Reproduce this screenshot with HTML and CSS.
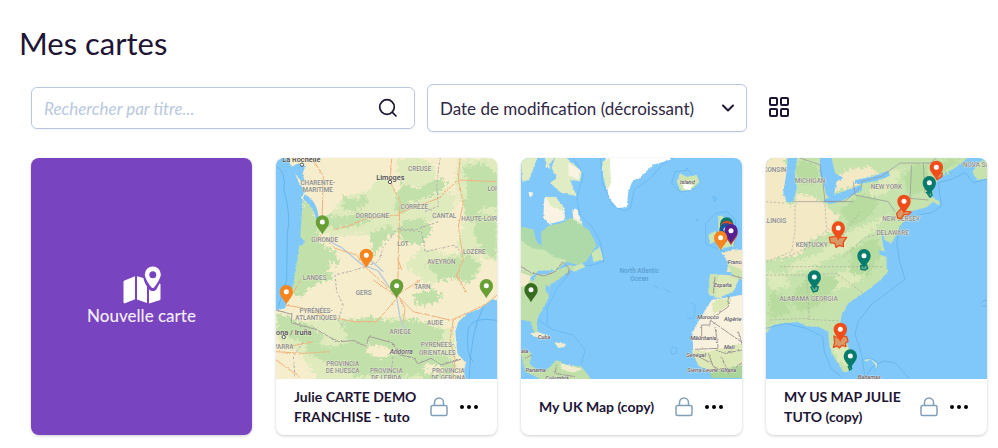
FILE: index.html
```html
<!DOCTYPE html>
<html lang="fr">
<head>
<meta charset="utf-8">
<meta name="viewport" content="width=device-width, initial-scale=1">
<title>Mes cartes</title>
<link rel="stylesheet" href="styles.css">
</head>
<body>
<svg class="defs" aria-hidden="true">
  <defs>
    <filter id="rough" x="-5%" y="-5%" width="110%" height="110%">
      <feTurbulence type="fractalNoise" baseFrequency="0.1" numOctaves="3" seed="4"/>
      <feDisplacementMap in="SourceGraphic" scale="34" xChannelSelector="R" yChannelSelector="G"/>
    </filter>
    <filter id="coast" x="-5%" y="-5%" width="110%" height="110%">
      <feTurbulence type="fractalNoise" baseFrequency="0.15" numOctaves="2" seed="8"/>
      <feDisplacementMap in="SourceGraphic" scale="8" xChannelSelector="R" yChannelSelector="G"/>
    </filter>
    <symbol id="pin" viewBox="-24 -62 48 64" overflow="visible">
      <path d="M0 0C-4-12-20-22-20-38A20 20 0 1 1 20-38C20-22 4-12 0 0Z"/>
      <circle cy="-38" r="7.500" fill="#fff"/>
    </symbol>
    <symbol id="lock" viewBox="0 0 18 20">
      <path d="M2.500 8.500h13a1.500 1.500 0 0 1 1.500 1.500v7a1.500 1.500 0 0 1-1.500 1.500h-13A1.500 1.500 0 0 1 1 17v-7a1.500 1.500 0 0 1 1.500-1.500ZM4.500 8.500V5.500a4.500 4.500 0 0 1 9 0v3" fill="none" stroke="#7f9fb9" stroke-width="1.500"/>
    </symbol>
    <symbol id="dots" viewBox="0 0 20 6">
      <circle cx="3" cy="3" r="2"/><circle cx="10" cy="3" r="2"/><circle cx="17" cy="3" r="2"/>
    </symbol>
  </defs>
</svg>

<main class="page">
  <h1 class="title">Mes cartes</h1>

  <form class="toolbar">
    <div class="search">
      <input class="search-input" type="text" aria-label="Rechercher par titre" placeholder="Rechercher par titre...">
      <button class="icon-button" type="button" aria-label="Rechercher">
        <svg width="20" height="20" viewBox="0 0 20 20" fill="none" stroke="#1e1535" stroke-width="1.700" stroke-linecap="round"><circle cx="9" cy="9" r="7.300"/><path d="M14.400 14.400 18 18"/></svg>
      </button>
    </div>
    <div class="sort">
      <select class="sort-select" aria-label="Trier par">
        <option>Date de modification (décroissant)</option>
      </select>
      <svg class="chevron" width="14" height="8" viewBox="0 0 14 8" fill="none" stroke="#1e1535" stroke-width="2" stroke-linecap="round" stroke-linejoin="round"><path d="m2 1.500 5 5 5-5"/></svg>
    </div>
    <button class="icon-button" type="button" aria-label="Affichage en grille">
      <svg width="24" height="24" viewBox="0 0 24 24" fill="none" stroke="#1e1535" stroke-width="2"><rect x="3" y="2" width="7" height="7" rx="1"/><rect x="14" y="2" width="7" height="7" rx="1"/><rect x="3" y="13" width="7" height="7" rx="1"/><rect x="14" y="13" width="7" height="7" rx="1"/></svg>
    </button>
  </form>

  <section class="grid">
    <a class="card new-card" href="#">
      <svg width="38" height="38" viewBox="0 0 38 38" fill="#fff" aria-hidden="true">
        <path d="M1.500 14.500 12 10.300V33.300L2 37.300C1.200 37.600.500 37.100.500 36.300V16Q.500 14.900 1.500 14.500ZM14 10.200 20.400 12.100C20.900 15.300 22.300 18.100 24 20.500V37L14 33.500Z"/>
        <path d="M26 23.200C28.100 25.700 31.500 25.700 33.500 23.200L36.400 17.800Q37.500 17.400 37.500 18.500V33Q37.500 33.800 36.600 34.200L26 37.500Z"/>
        <path fill-rule="evenodd" d="M29.800.500A8 8 0 0 0 21.800 8.500C21.800 12 26 18.500 28.600 21.500 29.300 22.300 30.300 22.300 31 21.500 33.600 18.500 37.800 12 37.800 8.500A8 8 0 0 0 29.800.500ZM29.800 5.300a3.500 3.500 0 1 1 0 7 3.500 3.500 0 0 1 0-7Z"/>
      </svg>
      <span class="new-label">Nouvelle carte</span>
    </a>

    <article class="card">
      <svg class="map" viewBox="18 24 663 663" role="img" aria-label="Carte du sud-ouest de la France">
        <rect x="18" y="24" width="663" height="663" fill="#f5edcb"/>
        <g fill="#dfebbd" filter="url(#rough)">
          <path d="M190 175l40-35 70-20 30-45 35 10 10 40 60 5 40 20 50-30 40 20-20 50-60 20-40 40-60-10-60 30-50-20-70 10-60-10z"/>
          <path d="M380 30l60-10 50 20 10 50-60 20-50-10zM560 30l130-10v320l-60-20-40 20-30-60 20-60-20-50zM400 345l60-50 70 20 60-10 50 40-40 60-60-30-60 30z"/>
          <path d="M190 500l120 10 80-10 160 40 10 60-40 100H150l-60-90-60-30-20-50 50-10z"/>
        </g>
        <g fill="#c2e1aa" filter="url(#rough)">
          <path d="M100 145l28 30 15 60 5 40 45 30 15 30-20 50-50 20-55 35-25-35 12-65 16-110z"/>
          <path d="M395 95l40 20 80-30 20 20-50 35-65 15-20 40-30-20zM215 130l40 20 30-15 10 25-40 25-35-10zM160 195l50 5 60-10 40 15-35 20-80 10-35-15zM395 215l55-10 40 30-35 50-50-5-25-35zM580 50l60-10 50 40v100l-50-10-35 50-30-50 20-40zM620 195l60 10v120l-40-15-30-60zM300 250l55-25 20 20-40 35-25 40z"/>
          <path d="M470 345l60-20 70-10 30 30-30 60-50-25-35 15zM430 430l60-10 30 15-20 20-60 15zM210 515l90-15 70 15 60-10 90 35-10 40-65 35-60-15-70 5-70-15zM18 490l50 15 50 20 45 35-10 20-60-5-70-25zM100 570l80 20 90-20 60 25 60-10 60 40-20 55-140-5-30 10-60-40-80-30zM400 600l80 10 60 10 20 30-15 25-70 15-80-30z"/>
        </g>
        <g fill="#f5edcb" filter="url(#rough)">
          <path d="M290 580l60 10 30 20-40 15-50-15zM560 140l25 20-8 60-25-30zM460 640l60 10 10 20-60 5zM180 330l25 30-30 10z"/>
        </g>
        <g fill="#80c8fa" filter="url(#coast)">
          <path d="M0 0H42L65 50 85 40 105 48 98 72 104 92 96 98 75 70 85 95 106 125 92 142 98 150 91 260 105 275 95 287 88 286 70 405 45 475 18 481 0 482Z"/>
          <path d="M104 133q38 20 42 72l8 25-14-8q-1-44-40-76z"/>
          <path d="M700 455 665 448 628 478 592 490 565 515 556 545 562 610 588 640 580 665 592 700H700Z"/>
        </g>
        <path d="M20 50q28 15 22 70 22 80 10 130l-2 140-25 80M700 515q-90-20-105 20-10 80 15 100M640 470q-40 80-42 215" fill="none" stroke="#55abe5" stroke-width="2"/>
        <path d="M165 268l50 25 60 50 50 20 55 80 10 60 20 50M340 365l-45-40" fill="none" stroke="#b7cbdc" stroke-width="4"/>
        <g fill="none" stroke="#f1b27e" stroke-width="3" filter="url(#coast)">
          <path d="M125 24l35 55-5 165M365 24l-5 70 30 60-5 155 0 50-5 80M150 255l45 40 65 20 30 40 90 80 50 50 110 25M385 195l-95 10-60 25-40 10M385 190l120-45 60-55 110 5M570 24l-5 65 15 70-15 70 15 100-25 60M45 465l60 10 70 25 80 15 65 0 60-70M50 455l40-60M380 440l-70-50M18 605l80 5 80-5M18 630l70 50M390 445l15 30-5 40M545 510l100-45 36-30M550 510l-10 60 15 55-5 60M390 430l60-40M395 360l-10-30M590 430l-30-55M20 595l60-10 50-10"/>
        </g>
        <g fill="none" stroke="#b3adae" stroke-width="3" stroke-dasharray="8 5" filter="url(#coast)">
          <path d="M510 24l-10 80 5 65-40 15M505 215l-70 25-50-5-45 55-15 45-70 25-60 15 5 50 20 40-15 45 15 20M390 240l65 5 10 60 90-20 20 25M75 680l-5-60 30-45M370 620l-10 65"/>
        </g>
        <path d="M18 480l48 13-3 25 75 20 65 37 50-3 35 17 10-30 70 20 20 35 45 10 10 18 40-17 30 20 60-17" fill="none" stroke="#a09b98" stroke-width="3" filter="url(#coast)"/>
        <g class="place">
          <text x="449" y="63">CREUSE</text><text x="143" y="106">CHARENTE-</text><text x="143" y="127">MARITIME</text><text x="433" y="177">CORRÈZE</text><text x="307" y="205">DORDOGNE</text><text x="523" y="205">CANTAL</text><text x="633" y="213">HAUTE-LOIRE</text><text x="164" y="275">GIRONDE</text><text x="399" y="289">LOT</text><text x="613" y="311">LOZÈRE</text><text x="514" y="343">AVEYRON</text><text x="678" y="123">LOIRE</text>
          <text x="134" y="391">LANDES</text><text x="281" y="436">GERS</text><text x="457" y="417">TARN</text><text x="138" y="490">PYRÉNÉES-</text><text x="138" y="511">ATLANTIQUES</text><text x="495" y="524">AUDE</text><text x="391" y="553">ARIÈGE</text><text x="502" y="592">PYRÉNÉES-</text><text x="502" y="614">ORIENTALES</text><text x="27" y="598">NAVARRA</text><text x="218" y="648">PROVINCIA</text><text x="218" y="669">DE HUESCA</text><text x="349" y="669">PROVINCIA</text><text x="349" y="690">DE LÉRIDA</text><text x="535" y="669">PROVINCIA</text><text x="535" y="690">DE GERONA</text>
        </g>
        <g class="place city">
          <text x="94" y="36">La Rochelle</text><text x="361" y="89">Limoges</text><text x="40" y="554">Pamplona / Iruña</text><text class="andorra" x="394" y="612">Andorra</text>
        </g>
        <g fill="#fff" stroke="#555" stroke-width="3"><circle cx="96" cy="44" r="5"/><circle cx="360" cy="96" r="5"/><circle cx="41" cy="561" r="5"/></g>
        <use href="#pin" x="133" y="192" width="48" height="64" fill="#68a037"/>
        <use href="#pin" x="265" y="292" width="48" height="64" fill="#f5851f"/>
        <use href="#pin" x="356" y="383" width="48" height="64" fill="#68a037"/>
        <use href="#pin" x="25" y="401" width="48" height="64" fill="#f5851f"/>
        <use href="#pin" x="625" y="383" width="48" height="64" fill="#68a037"/>
      </svg>
      <footer class="card-foot">
        <h2 class="card-title">Julie CARTE DEMO FRANCHISE - tuto</h2>
        <svg class="lock" width="18" height="20" aria-hidden="true"><use href="#lock"/></svg>
        <button class="icon-button" type="button" aria-label="Options"><svg width="20" height="6"><use href="#dots"/></svg></button>
      </footer>
    </article>

    <article class="card">
      <svg class="map" viewBox="18 24 663 663" role="img" aria-label="Carte de l’Atlantique Nord">
        <rect x="18" y="24" width="663" height="663" fill="#80c8fa"/>
        <g fill="none" stroke="#60b4ee" stroke-width="2">
          <path d="M175 24l30 50-20 70 10 50 35 35 25 45 12 60-30 10-60 10-50 60-30 60 0 50M257 24l5 75 30 65 35 20 20-10 10-55 50-35 40-45 40-20M470 100l10-35 40-5 32 35-20 25-35 6zM572 220l30-30 35-5 25 25-5 70-20 30-65-30zM55 500l60 40 60 15 35 45-10 40M466 595l5-5 15 5-3 15-12 3zM445 415l22 12M415 405l15 10M593 140l12 4-5 10zM510 55h8v5M516 505h20l5-40-10-5M545 208h6v3h-6z"/>
        </g>
        <g filter="url(#coast)">
          <path fill="#fff" d="M284 0h185l-5 30-50 14-40 40-22 10-12 30-5 48-28 2-22-26-14-45-10-50z"/>
          <path fill="#dfecc4" d="M262 35l22-12 4 75-10 25-12-35zM18 24l50-4-25 70-22 5zM120 24h35l45 40-5 30-30-5 20 50-45-10-35-30 20-15-15-30zM88 20l30 5-20 25zM92 42h12v12H92z"/>
          <path fill="#faf3e3" d="M88 145l30-5 28 30 5 40-48 12-18-20zM160 40l35 20-5 28-30-12zM172 180l12-5 18 45-25 5zM40 125l15 3-8 15z"/>
          <path fill="#dfecc4" d="M92 140l30 2 24 28-2 14-36-16zM178 205l20 12 10 20-35-5z"/>
          <path fill="#aed9a8" d="M10 228l45 10 10 38 15 12-2-40 20-20 45-10 25-15 55 38 22 45-30 48-25 12-35-10-30 25-35-5-30 28-50 15z"/>
          <path fill="#cde6b5" d="M10 265l40 30 40 5 25 20 40 10-45 40-65 25-45 5zM230 310l25-20 10 40-30 6zM160 355l40-15 12 10-35 15z"/>
          <path fill="#bfdfaa" d="M10 355l40 20 70-12 45-18 15 5-45 35-30 20-5 40-30 55-5 20 8 42-12-8-15-40-50-8z"/>
          <path fill="#f3edcd" d="M18 368l30 10-10 28-20 5z"/>
          <path fill="#80c8fa" d="M45 385l25-23 50-2-20 12-35 2-10 20zM92 405l12 5-2 25-10-10z"/>
          <path fill="#f0edcf" d="M45 550l25-3 35 12-15 8-35-8zM118 577l35 4-5 10-18 3z"/>
          <path fill="#c0dfa9" d="M15 600l35 8-5 35 30 22 20-5 30-30 30 15 45 5 30 40 65 14H90l-20-20-40-20z"/>
          <path fill="#f0edcf" d="M135 640l35 8 30 10-25 10-35-10z"/>
          <path fill="#cfe5b1" d="M485 95l10-25 20 10 30-5 8 22-25 23-30 3zM580 255l20-12 15 20-30 20zM610 200l10-5 20 30 20 40-5 22-45 12 15-22-15-10z"/>
          <path fill="#fff" d="M505 100l30 5-10 15-20-3z"/>
          <path fill="#f2e9c8" d="M620 310l35-12 35 2v70l-55-5 5-30z"/>
          <path fill="#dbe9b9" d="M585 372l50 3 40 5-20 45-45 20-30-13z"/>
          <path fill="#cce3ae" d="M585 372l25 3-8 60-22-5zM635 340l46 20v30l-25-5z"/>
          <path fill="#f8f1dd" d="M590 450l90-15h15v175l-85 30-75-30-3-65 30-50z"/>
          <path fill="#dce8b5" d="M590 460l20-12 40-5-5 20-50 30zM530 600l50 5 30-8 85-20v105l-95-10-50-25z"/>
          <path fill="#a9d59a" d="M585 670l50-15 55-10v40l-100-2z"/>
        </g>
        <g fill="none" stroke="#a39a98" stroke-width="3" filter="url(#coast)">
          <path d="M18 350l30 18 40 10 30-12 25-30 20 20-5 20M585 510l100 70M585 510v15h-25v35h-20M600 530l10 65-70 3M640 435v35l-50 35M600 600l30 10 50-10M580 610l15 40 35 15M620 620l20 50 45-35M670 545l15 50M550 620l40 20M125 645l-5 25 60 10M30 625l20-10M600 380l-5 50M650 375l30 10"/>
        </g>
        <g class="place sea"><text x="373" y="370">North Atlantic</text><text x="373" y="394">Ocean</text></g>
        <g class="place country">
          <text x="517" y="103">Island</text><text x="663" y="342">France</text><text x="623" y="411">España</text><text x="579" y="508">Morocco</text><text x="653" y="512">Algérie</text><text x="565" y="570">Mauritania</text><text x="643" y="596">Mali</text><text x="543" y="620">Sénégal</text><text x="563" y="665">Sierra Leone</text><text x="641" y="667">Ghana</text><text x="87" y="566">Cuba</text><text x="62" y="665">Panama</text><text x="126" y="691">Colombia</text><text x="0" y="609">Guatemala</text>
        </g>
        <use href="#pin" x="24" y="395" width="48" height="64" fill="#386b20"/>
        <use href="#pin" x="611" y="198" width="48" height="64" fill="#08756a"/>
        <use href="#pin" x="612" y="208" width="48" height="64" fill="#d84a25"/>
        <use href="#pin" x="609" y="215" width="48" height="64" fill="#135b9c"/>
        <use href="#pin" x="624" y="224" width="48" height="64" fill="#c63d30"/>
        <use href="#pin" x="624" y="218" width="48" height="64" fill="#542093"/>
        <use href="#pin" x="593" y="239" width="48" height="64" fill="#f5851f"/>
      </svg>
      <footer class="card-foot">
        <h2 class="card-title">My UK Map (copy)</h2>
        <svg class="lock" width="18" height="20" aria-hidden="true"><use href="#lock"/></svg>
        <button class="icon-button" type="button" aria-label="Options"><svg width="20" height="6"><use href="#dots"/></svg></button>
      </footer>
    </article>

    <article class="card">
      <svg class="map" viewBox="18 24 663 663" role="img" aria-label="Carte de l’est des États-Unis">
        <rect x="18" y="24" width="663" height="663" fill="#80c8fa"/>
        <g filter="url(#coast)">
          <path fill="#c6e2ad" d="M0 0H645L610 35 590 50 565 65 535 85 520 115 515 140 540 155 535 165 520 155 500 172 430 190 440 205 420 235 400 270 385 290 375 270 365 250 370 285 380 320 380 350 385 365 355 395 310 430 265 460 245 495 240 525 262 580 275 625 270 660 255 670 240 650 215 610 205 570 205 545 175 530 145 530 110 515 80 520 40 525 18 550H0Z"/>
          <path fill="#c6e2ad" d="M637 68l15-28 35-20v65l-35 5z"/>
        </g>
        <g fill="#f3e9c5" filter="url(#rough)">
          <path d="M0 10h70l15 64-15 60 15 30 70 0 50 10 30 25-20 45-70 30-30 45-90 10H0zM215 85l60-30 60-5 20 20-50 30-70 20-30 20zM105 130l50 10 50 30-10 30-80-15z"/>
        </g>
        <g fill="#dce9b8" filter="url(#rough)">
          <path d="M390 190l-60 60-50 40-80 40-60 30-60 15 20-40 70-20 80-60zM400 55l30 5-35 60-60 30-10-30zM240 365l70-10 20 15-60 40-60 15zM18 365l50 5 30 40-70 10zM215 592l45-5 10 45-15 20-25-30z"/>
        </g>
        <g fill="#b8dc9f" filter="url(#rough)">
          <path d="M430 80l40-40 40 0-15 80-50 20zM240 180l60-50 60 20-30 50-60 30zM270 300l80-40 15 50-40 70-50-10zM130 395l80-20 30 20-60 70-50 20-50-30zM30 430l50 10 10 50-60 20zM105 40l45-10 30 40-20 30-45-5zM520 40l60-15 20 10-60 45z"/>
        </g>
        <g fill="#80c8fa" filter="url(#coast)">
          <path d="M85 10h28l-8 65 5 40-10 40-20 2-10-30 8-50zM180 24h35l10 45 25 15-20 10-10 50-20-5-10-40-10-25zM192 150l30-15 80-30 5 15-55 30-35 12-25-5zM285 90l50-10 50-18 5 15-40 15-50 10-15 0zM365 245l10 25 15 10-5 28-15-15zM355 300l25 5 5 15-25-5z"/>
        </g>
        <g fill="none" stroke="#5eaee5" stroke-width="2">
          <path d="M680 88l-40 10-25-30-40 20-40 10 5 40 5 30-30 20-60 10-35 30-10 50 10 60 15 50-40 30-60 45-40 50-10 40 20 60 10 70 20-30 35-20 35 5 40 45 20 30M18 535l60-15 60 15 50 25 5 45 20 50 30 25M662 460l10-10 15 5v15l-20-2M310 630l18-5M330 625l20 10 2 15-8 12"/>
        </g>
        <path d="M310 630l20-4-8 8zM330 625l22 17-4 18-1-15z" fill="#e3ecc8"/>
        <g fill="none" stroke="#97939b" stroke-width="2">
          <path d="M120 24l60 20 10 65 5 45 60 0 50-45 0-15 60-15 55-40 90 0 20-15M100 155l180 0M280 95l5 40 100 20 20 30M455 45l-5 100 55 5M490 40l5 90"/>
          <path d="M18 155l60 5M105 165v80l-10 60-75 30M195 165l5 70 50 20 50-70M200 240l-50 50-80 35M60 350h310M18 375h120l5 40 5 90-120 5M140 375l90-5 80 60M145 508l95 5M250 320l70-60 60-10" stroke-dasharray="7 5" stroke="#acab9e"/>
        </g>
        <g class="place">
          <text x="28" y="66">WISCONSIN</text><text x="150" y="99">MICHIGAN</text><text x="379" y="116">NEW YORK</text><text x="670" y="51">NOVA SCOTIA</text><text x="42" y="220">ILLINOIS</text><text x="423" y="213">NEW JERSEY</text><text x="398" y="256">DELAWARE</text><text x="155" y="290">KENTUCKY</text><text x="103" y="454">ALABAMA</text><text x="193" y="452">GEORGIA</text>
        </g>
        <g class="place country"><text x="328" y="688">Bahamas</text></g>
        <g fill="#d99a68" stroke="#e94e1b" stroke-width="4" stroke-linejoin="round">
          <path d="M208 262l16-2 8-10 10 12 18 0-10 14 0 14-12-4-10 6-3-12-14-2z"/>
          <path d="M410 190l15-16 12 10 16 2-8 8-14 0-8 12-10-2z"/>
          <path d="M222 558l12 6 8-6 18 2 4 14-8 6 2 10-12-4-8 8-6-6-12 4 4-14z"/>
          <path d="M530 75l16-6 0 10-16 10z"/>
        </g>
        <g fill="#62ae91" stroke="#087c6c" stroke-width="4">
          <path d="M500 128l14-4 2 12-6 6zM302 347l18-2 3 10-8 5-12-2zM153 412l8-6 14 5-3 12-12 3zM265 650l8-2 2 8-6 4z"/>
        </g>
        <use href="#pin" x="505" y="28" width="48" height="64" fill="#ef4e1b"/>
        <use href="#pin" x="484" y="74" width="48" height="64" fill="#087c6c"/>
        <use href="#pin" x="408" y="130" width="48" height="64" fill="#ef4e1b"/>
        <use href="#pin" x="211" y="210" width="48" height="64" fill="#ef4e1b"/>
        <use href="#pin" x="288" y="293" width="48" height="64" fill="#087c6c"/>
        <use href="#pin" x="139" y="357" width="48" height="64" fill="#087c6c"/>
        <use href="#pin" x="217" y="514" width="48" height="64" fill="#ef4e1b"/>
        <use href="#pin" x="247" y="594" width="48" height="64" fill="#087c6c"/>
      </svg>
      <footer class="card-foot">
        <h2 class="card-title">MY US MAP JULIE TUTO (copy)</h2>
        <svg class="lock" width="18" height="20" aria-hidden="true"><use href="#lock"/></svg>
        <button class="icon-button" type="button" aria-label="Options"><svg width="20" height="6"><use href="#dots"/></svg></button>
      </footer>
    </article>
  </section>
</main>
</body>
</html>
```
FILE: styles.css
```css
* {
  box-sizing: border-box;
}

body {
  margin: 0;
  background: #fff;
  color: #1e1535;
  font-family: Lato, "Open Sans", sans-serif;
  font-size: 17px;
}

.defs {
  position: absolute;
  width: 0;
  height: 0;
}

.page {
  padding: 24px 11px 12px 31px;
}

.title {
  margin: 0 0 22px -12px;
  font-size: 31px;
  font-weight: 400;
  line-height: 38px;
}

.toolbar {
  display: flex;
  align-items: center;
  gap: 12px;
  margin-bottom: 26px;
}

.search {
  display: flex;
  align-items: center;
  flex: 0 1 384px;
  height: 42px;
  padding: 0 16px 0 12px;
  border: 1px solid #b9c8df;
  border-radius: 6px;
  box-shadow: 0 1px 2px rgba(30, 21, 53, 0.06);
}

.search-input {
  flex: 1;
  min-width: 0;
  padding: 0;
  border: 0;
  outline: 0;
  background: none;
  color: inherit;
  font: inherit;
}

.search-input::placeholder {
  color: #b9c8df;
  font-style: italic;
  opacity: 1;
}

.icon-button {
  display: flex;
  padding: 0;
  border: 0;
  background: none;
  cursor: pointer;
}

.sort {
  display: grid;
  align-items: center;
  flex: 0 1 320px;
  margin-right: 8px;
}

.sort-select,
.chevron {
  grid-area: 1 / 1;
}

.sort-select {
  width: 100%;
  height: 48px;
  padding: 0 40px 0 12px;
  appearance: none;
  border: 1px solid #b9c8df;
  border-radius: 6px;
  background: #fff;
  box-shadow: 0 1px 2px rgba(30, 21, 53, 0.06);
  color: #2f2745;
  font: inherit;
}

.chevron {
  justify-self: end;
  margin-right: 12px;
  pointer-events: none;
}

.grid {
  display: grid;
  grid-template-columns: repeat(4, 1fr);
  gap: 24px;
}

.card {
  display: flex;
  flex-direction: column;
  overflow: hidden;
  border-radius: 8px;
  background: #fff;
  box-shadow: 0 1px 3px rgba(0, 0, 0, 0.2);
}

.new-card {
  align-items: center;
  justify-content: center;
  background: #7944c0;
  color: #f3edfa;
  text-decoration: none;
}

.new-label {
  font-weight: 500;
  line-height: 24px;
}

.map {
  display: block;
  width: 100%;
  aspect-ratio: 1;
}

.place {
  fill: #8a8d8c;
  stroke: #f5f1dc;
  stroke-width: 2px;
  paint-order: stroke;
  font-family: Roboto, sans-serif;
  font-size: 19px;
  font-weight: 500;
  text-anchor: middle;
}

.city {
  fill: #4c4b50;
  font-size: 22px;
}

.country {
  fill: #5b5870;
  font-size: 17px;
  font-style: italic;
}

.andorra {
  fill: #5b5870;
  font-size: 20px;
  font-style: italic;
}

.sea {
  fill: #5a9ed0;
  stroke: none;
}

.card-foot {
  display: flex;
  align-items: center;
  min-height: 56px;
  padding: 8px 18px;
}

.card-title {
  flex: 1;
  margin: 0;
  font-size: 14px;
  font-weight: 700;
  line-height: 20px;
}

.lock {
  margin: 0 11px;
}
```
